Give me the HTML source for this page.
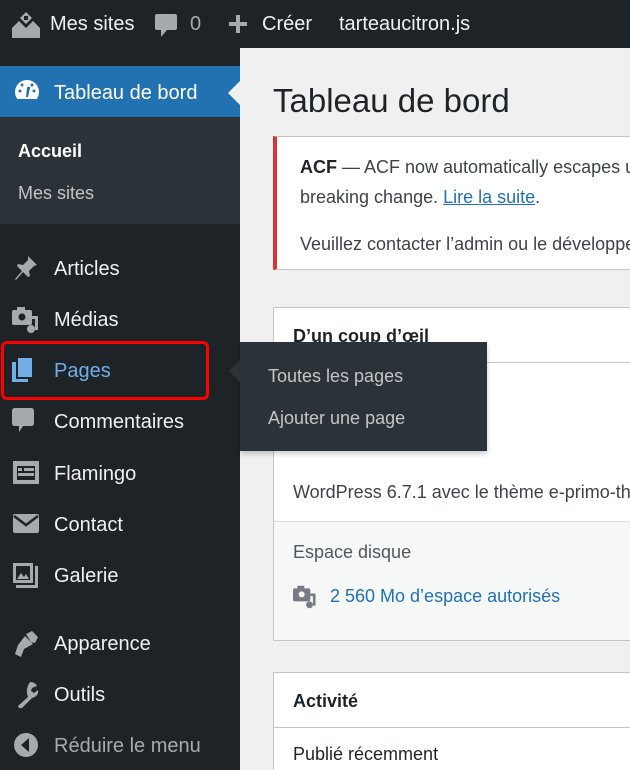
<!DOCTYPE html>
<html style="overflow:hidden;width:630px;height:770px"><head><meta charset="utf-8"><style>
*{box-sizing:border-box;margin:0;padding:0}
body{width:630px;height:770px;overflow:hidden;background:#f0f0f1;font-family:"Liberation Sans",sans-serif;position:relative}
.top{position:absolute;left:0;top:0;width:630px;height:48px;background:#1d2327;color:#f0f0f1;font-size:20px}
.top span{position:absolute;top:13px}
.side{position:absolute;left:0;top:48px;width:240px;height:722px;background:#1d2327}
.item{position:absolute;left:0;width:240px;height:50px;color:#f0f0f1;font-size:20px}
.item .t{position:absolute;left:54px;top:15px}
.item svg{position:absolute;left:12px;top:12px}
.abs{position:absolute}
.box{position:absolute;left:273px;width:357px;background:#fff;border:1px solid #c3c4c7;border-right:0;overflow:hidden}
</style></head><body>
<div class="top">
<svg class="abs" style="left:11px;top:12px" width="30" height="26" viewBox="0 0 30 26"><path d="M15 0l6 6-6 6-6-6z M8 9l7 7v10H1V16z M22 9l7 7v10H15V16z" fill="#a7aaad"/><rect x="13" y="4" width="4" height="4" fill="#1d2327"/></svg>
<span style="left:50px">Mes sites</span>
<svg class="abs" style="left:155px;top:14px" width="22" height="24" viewBox="0 0 22 24"><path d="M2 0h18q2 0 2 2v12q0 2-2 2H12l-6 7v-7H2q-2 0-2-2V2q0-2 2-2z" fill="#a7aaad"/></svg>
<span style="left:190px;color:#a7aaad">0</span>
<svg class="abs" style="left:229px;top:15px" width="18" height="18"><path d="M7 0h4v7h7v4h-7v7H7v-7H0V7h7z" fill="#a7aaad"/></svg>
<span style="left:262px">Créer</span>
<span style="left:339px">tarteaucitron.js</span>
</div>
<div class="side">
<div class="abs" style="left:0;top:18px;width:240px;height:51px;background:#2271b1"></div>
<svg class="abs" style="left:14px;top:31px" width="26" height="24" viewBox="0 0 26 24"><circle cx="13" cy="13" r="12" fill="#fff"/><rect x="0" y="20" width="26" height="5" fill="#2271b1"/><path d="M13 18l2-9-1 0z" fill="#2271b1" stroke="#2271b1" stroke-width="2"/><circle cx="6" cy="12" r="1.5" fill="#2271b1"/><circle cx="8" cy="6" r="1.5" fill="#2271b1"/><circle cx="20" cy="12" r="1.5" fill="#2271b1"/><circle cx="18" cy="6" r="1.5" fill="#2271b1"/></svg>
<div class="abs" style="left:54px;top:34px;color:#fff;font-size:20px">Tableau de bord</div>
<div class="abs" style="left:228px;top:33px;width:0;height:0;border:12px solid transparent;border-right-color:#f0f0f1;border-left:0"></div>
<div class="abs" style="left:0;top:69px;width:240px;height:107px;background:#2c3338"></div>
<div class="abs" style="left:18px;top:93px;color:#fff;font-size:18px;font-weight:bold">Accueil</div>
<div class="abs" style="left:18px;top:135px;color:#c3c4c7;font-size:18px">Mes sites</div>
</div>
<div class="item" style="top:243px"><svg width="26" height="26" viewBox="0 0 26 26"><path d="M16 1l9 9-3 1-5 5 1 5-2 1-5-5-7 8-1-1 7-8-5-5 1-2 5 1 5-5z" fill="#a7aaad"/></svg><span class="t">Articles</span></div>
<div class="item" style="top:294px"><svg width="30" height="28" viewBox="0 0 30 28"><rect x="0" y="4" width="20" height="15" rx="2" fill="#a7aaad"/><rect x="5" y="1" width="8" height="4" fill="#a7aaad"/><circle cx="10" cy="11" r="3.5" fill="#1d2327"/><path d="M20 10h6v14h-3v-11h-3z" fill="#a7aaad"/><circle cx="19" cy="23" r="4" fill="#a7aaad"/></svg><span class="t">Médias</span></div>
<div class="item" style="top:345px"><svg width="26" height="28" viewBox="0 0 26 28"><rect x="0" y="5" width="16" height="20" fill="#72aee6"/><rect x="5" y="0" width="16" height="21" fill="#72aee6" stroke="#1d2327" stroke-width="2"/></svg><span class="t" style="color:#72aee6">Pages</span></div>
<div class="abs" style="left:1px;top:341px;width:208px;height:59px;border:3px solid #f00;border-radius:6px"></div>
<div class="item" style="top:396px"><svg width="24" height="28" viewBox="0 0 24 28"><path d="M3 0h16q3 0 3 3v12q0 3-3 3h-8l-4 6v-6H3q-3 0-3-3V3q0-3 3-3z" fill="#a7aaad"/></svg><span class="t">Commentaires</span></div>
<div class="item" style="top:448px"><svg width="28" height="26" viewBox="0 0 28 26"><rect x="1" y="1" width="26" height="23" fill="#a7aaad"/><rect x="5" y="6" width="18" height="14" fill="#1d2327"/><rect x="6" y="8" width="4" height="3" fill="#a7aaad"/><rect x="12" y="8" width="10" height="3" fill="#a7aaad"/><rect x="6" y="13" width="16" height="3" fill="#a7aaad"/></svg><span class="t">Flamingo</span></div>
<div class="item" style="top:499px"><svg width="28" height="26" viewBox="0 0 28 26"><rect x="1" y="3" width="26" height="19" rx="2" fill="#a7aaad"/><path d="M2 5l12 9 12-9" stroke="#1d2327" stroke-width="2.5" fill="none"/></svg><span class="t">Contact</span></div>
<div class="item" style="top:550px"><svg width="28" height="28" viewBox="0 0 28 28"><rect x="4" y="4" width="22" height="22" fill="#a7aaad"/><rect x="0" y="0" width="22" height="22" fill="#a7aaad" stroke="#1d2327" stroke-width="2"/><rect x="4" y="4" width="14" height="14" fill="#1d2327"/><path d="M5 17l4-6 3 4 2-3 3 5z" fill="#a7aaad"/></svg><span class="t">Galerie</span></div>
<div class="item" style="top:618px"><svg width="28" height="28" viewBox="0 0 28 28"><path d="M14 4l6-3 6 6-3 6-4-1zM13 6l8 8-9 5-3 8-6-3 3-9z" fill="#a7aaad"/></svg><span class="t">Apparence</span></div>
<div class="item" style="top:669px"><svg width="28" height="28" viewBox="0 0 28 28"><path d="M18 1q5 0 7 4l-5 2-1 3 3 2 4-3q1 6-6 8l-10 10q-3 1-4-2L16 16q-3-8 2-15z" fill="#a7aaad"/></svg><span class="t">Outils</span></div>
<div class="item" style="top:720px"><svg width="28" height="28" viewBox="0 0 28 28"><circle cx="14" cy="13" r="12" fill="#a7aaad"/><path d="M17 6v14l-8-7z" fill="#1d2327"/></svg><span class="t" style="color:#a7aaad">Réduire le menu</span></div>

<div class="abs" style="left:273px;top:82px;font-size:33px;color:#1d2327">Tableau de bord</div>
<div class="box" style="top:136px;height:134px;border-left:4px solid #d63638;font-size:18px;color:#3c434a;line-height:30px">
<div class="abs" style="left:23px;top:15px;white-space:nowrap"><b style="color:#1d2327">ACF</b> — ACF now automatically escapes unsafe<br>breaking change. <span style="color:#2271b1;text-decoration:underline">Lire la suite</span>.</div>
<div class="abs" style="left:23px;top:92px;white-space:nowrap">Veuillez contacter l’admin ou le développeur</div>
</div>
<div class="box" style="top:307px;height:334px">
<div class="abs" style="left:19px;top:18px;font-size:18px;font-weight:bold;color:#1d2327;white-space:nowrap">D’un coup d’œil</div>
<div class="abs" style="left:0;top:54px;width:400px;border-top:1px solid #c3c4c7"></div>
<div class="abs" style="left:19px;top:174px;font-size:18px;color:#3c434a;white-space:nowrap">WordPress 6.7.1 avec le thème e-primo-theme</div>
<div class="abs" style="left:0;top:213px;width:400px;height:120px;background:#f6f7f7;border-top:1px solid #dcdcde"></div>
<div class="abs" style="left:19px;top:234px;font-size:18px;color:#50575e">Espace disque</div>
<svg class="abs" style="left:19px;top:276px" width="26" height="26" viewBox="0 0 30 28"><rect x="0" y="4" width="20" height="15" rx="2" fill="#787c82"/><rect x="5" y="1" width="8" height="4" fill="#787c82"/><circle cx="10" cy="11" r="3.5" fill="#f6f7f7"/><path d="M20 10h6v14h-3v-11h-3z" fill="#787c82"/><circle cx="19" cy="23" r="4" fill="#787c82"/></svg>
<div class="abs" style="left:56px;top:278px;font-size:18px;color:#2271b1;white-space:nowrap">2 560 Mo d’espace autorisés</div>
</div>
<div class="box" style="top:672px;height:98px;border-bottom:0">
<div class="abs" style="left:19px;top:18px;font-size:18px;font-weight:bold;color:#1d2327">Activité</div>
<div class="abs" style="left:0;top:54px;width:400px;border-top:1px solid #c3c4c7"></div>
<div class="abs" style="left:19px;top:71px;font-size:18px;color:#1d2327;white-space:nowrap">Publié récemment</div>
</div>

<div class="abs" style="left:240px;top:342px;width:247px;height:109px;background:#2c3338;box-shadow:0 3px 5px rgba(0,0,0,.2)"></div>
<div class="abs" style="left:229px;top:360px;width:0;height:0;border:11px solid transparent;border-right-color:#2c3338;border-left:0"></div>
<div class="abs" style="left:268px;top:366px;font-size:18px;color:#c3c4c7">Toutes les pages</div>
<div class="abs" style="left:268px;top:408px;font-size:18px;color:#c3c4c7">Ajouter une page</div>
</body></html>
